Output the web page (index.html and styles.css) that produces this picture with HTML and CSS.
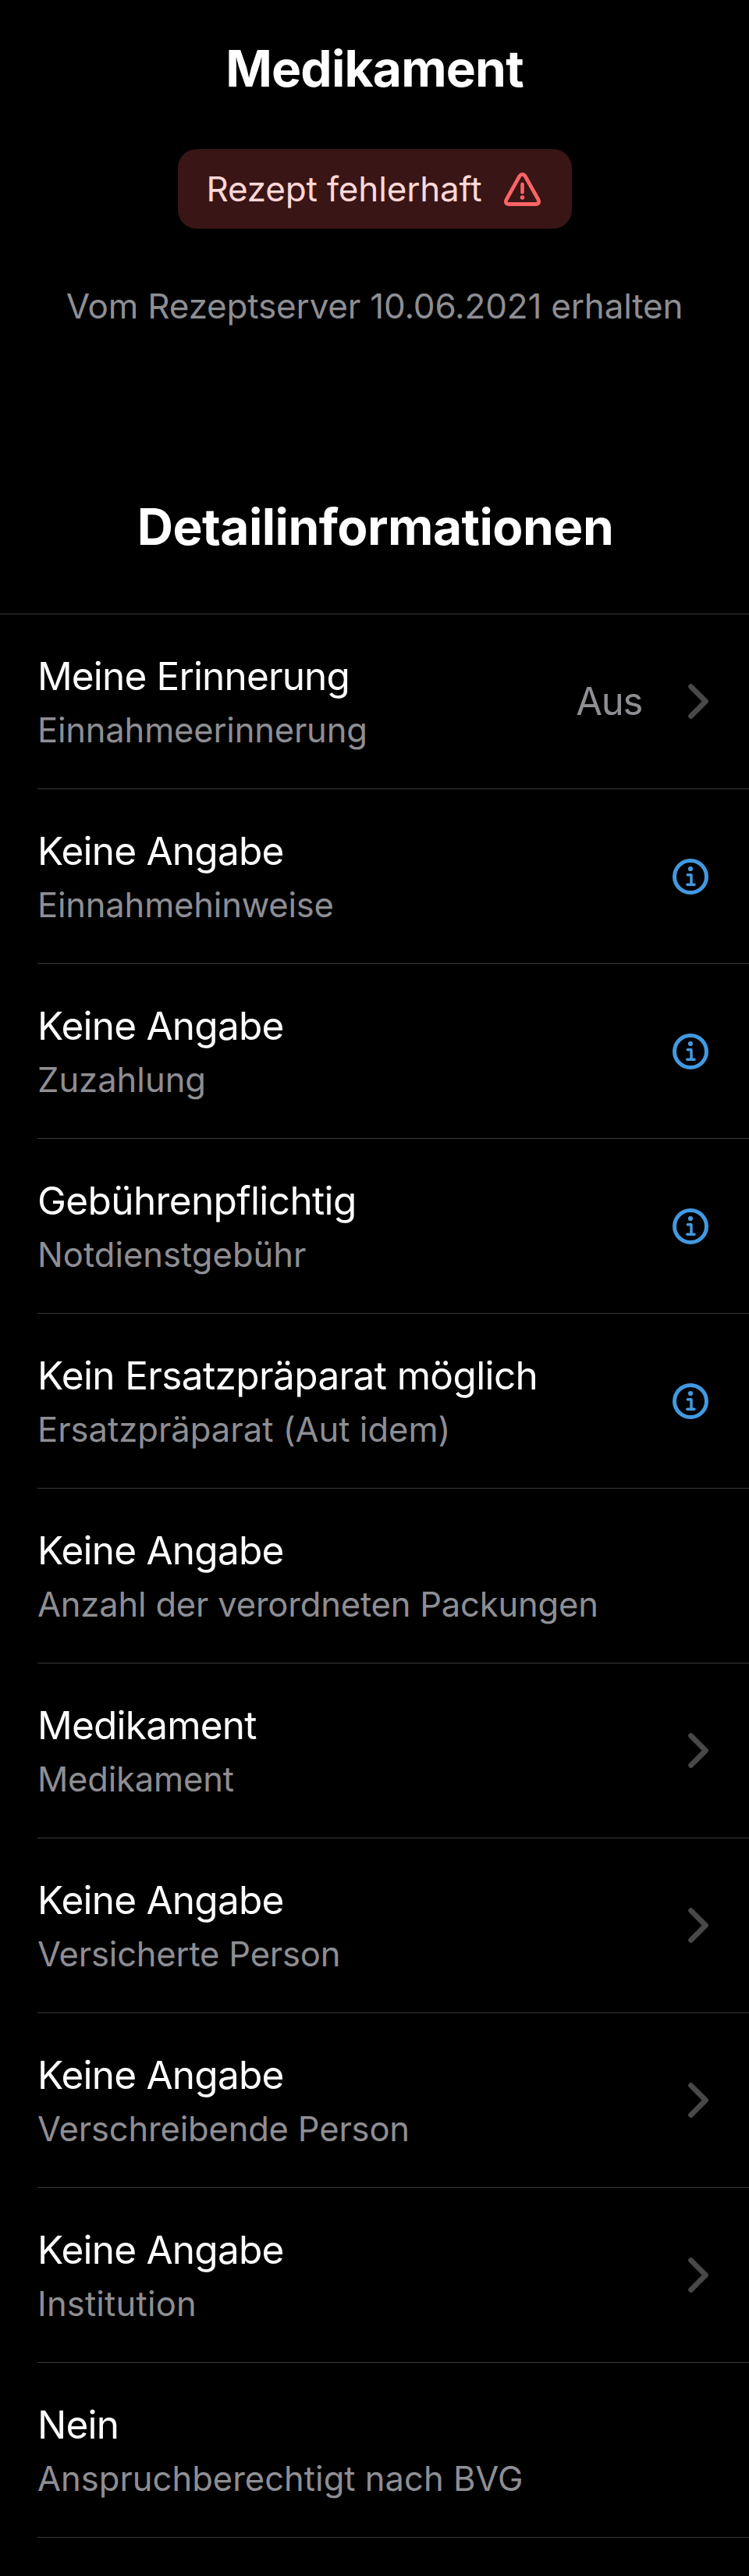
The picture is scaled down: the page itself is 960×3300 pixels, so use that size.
FILE: index.html
```html
<!DOCTYPE html>
<html lang="de">
<head>
<meta charset="utf-8">
<title>Medikament</title>
<link rel="stylesheet" href="styles.css">
</head>
<body>
<svg class="sprite" aria-hidden="true">
  <symbol id="chevron" viewBox="0 0 26 45">
    <path d="M3.6 3.7 22.4 22.5 3.6 41.3" fill="none" stroke="currentColor" stroke-width="6.8" stroke-linecap="round" stroke-linejoin="round"/>
  </symbol>
  <symbol id="info" viewBox="0 0 46 46">
    <circle cx="23" cy="23" r="20.5" fill="none" stroke="currentColor" stroke-width="5"/>
    <circle cx="23" cy="13" r="3.1" fill="currentColor"/>
    <path d="M19.3 20.8H24V32.8M18.8 33.2H28" fill="none" stroke="currentColor" stroke-width="3.5" stroke-linecap="round" stroke-linejoin="round"/>
  </symbol>
</svg>
<header class="header">
  <h1 class="heading">Medikament</h1>
  <div class="badge">
    <span>Rezept fehlerhaft</span>
    <svg class="badge-icon" viewBox="0 0 47 43">
      <path d="M19.9 4.6Q23.5 .2 27.1 4.6L43.8 34.4Q46.5 40.5 40 40.5H7Q.5 40.5 3.2 34.4Z" fill="none" stroke="currentColor" stroke-width="4.8" stroke-linejoin="round"/>
      <path d="M23.5 15V25.2" fill="none" stroke="currentColor" stroke-width="4.6" stroke-linecap="round"/>
      <circle cx="23.5" cy="32" r="2.8" fill="currentColor"/>
    </svg>
  </div>
  <p class="received">Vom Rezeptserver 10.06.2021 erhalten</p>
</header>
<main>
  <h2 class="heading heading-details">Detailinformationen</h2>
  <ul class="list">
    <li class="row"><div class="texts"><div class="value tight">Meine Erinnerung</div><div class="label snug">Einnahmeerinnerung</div></div><span class="state">Aus</span><svg class="chevron"><use href="#chevron"/></svg></li>
    <li class="row"><div class="texts"><div class="value">Keine Angabe</div><div class="label snug">Einnahmehinweise</div></div><svg class="info"><use href="#info"/></svg></li>
    <li class="row"><div class="texts"><div class="value">Keine Angabe</div><div class="label">Zuzahlung</div></div><svg class="info"><use href="#info"/></svg></li>
    <li class="row"><div class="texts"><div class="value loose">Gebührenpflichtig</div><div class="label">Notdienstgebühr</div></div><svg class="info"><use href="#info"/></svg></li>
    <li class="row"><div class="texts"><div class="value loose">Kein Ersatzpräparat möglich</div><div class="label">Ersatzpräparat (Aut idem)</div></div><svg class="info"><use href="#info"/></svg></li>
    <li class="row"><div class="texts"><div class="value">Keine Angabe</div><div class="label snug">Anzahl der verordneten Packungen</div></div></li>
    <li class="row"><div class="texts"><div class="value">Medikament</div><div class="label snug">Medikament</div></div><svg class="chevron"><use href="#chevron"/></svg></li>
    <li class="row"><div class="texts"><div class="value">Keine Angabe</div><div class="label snug">Versicherte Person</div></div><svg class="chevron"><use href="#chevron"/></svg></li>
    <li class="row"><div class="texts"><div class="value">Keine Angabe</div><div class="label snug">Verschreibende Person</div></div><svg class="chevron"><use href="#chevron"/></svg></li>
    <li class="row"><div class="texts"><div class="value">Keine Angabe</div><div class="label airy">Institution</div></div><svg class="chevron"><use href="#chevron"/></svg></li>
    <li class="row"><div class="texts"><div class="value">Nein</div><div class="label">Anspruchberechtigt nach BVG</div></div></li>
  </ul>
</main>
</body>
</html>
```
FILE: styles.css
```css
* { box-sizing: border-box; margin: 0; padding: 0; }

html { background: #000; }

body {
  min-height: 3300px;
  background: #000;
  color: #fff;
  font-family: Inter, "Liberation Sans", sans-serif;
}

.sprite { display: none; }

.header {
  display: flex;
  flex-direction: column;
  align-items: center;
  padding-top: 48px;
}

.heading {
  font-size: 64px;
  line-height: 80px;
  font-weight: 700;
  letter-spacing: -0.79px;
  text-align: center;
}

.heading-details {
  margin: 213px 0 71px;
  padding-left: 2px;
  letter-spacing: -0.52px;
}

.badge {
  display: flex;
  align-items: center;
  justify-content: space-between;
  width: 505px;
  height: 102px;
  margin-top: 63px;
  padding: 0 40px 0 37px;
  border-radius: 24px;
  background: #391515;
  color: #fed7d7;
  font-size: 44px;
  line-height: 60px;
  letter-spacing: -0.17px;
}

.badge-icon { width: 47px; height: 43px; color: #fa6466; }

.received {
  margin-top: 69px;
  color: #8e8e93;
  font-size: 44px;
  line-height: 60px;
  letter-spacing: -0.19px;
}

.list { list-style: none; border-top: 1px solid #38383a; }

.row {
  display: flex;
  align-items: center;
  height: 224px;
  margin-left: 48px;
  padding-right: 52px;
  border-bottom: 1px solid #38383a;
}

.texts {
  flex: 1;
  align-self: flex-start;
  padding-top: 49px;
  white-space: nowrap;
}

.value {
  font-size: 49.5px;
  line-height: 60px;
  letter-spacing: -0.78px;
}

.value.tight { letter-spacing: -0.85px; }
.value.loose { letter-spacing: -0.62px; }

.label {
  margin-top: 11px;
  color: #8e8e93;
  font-size: 43.5px;
  line-height: 56px;
  letter-spacing: 0.02px;
}

.label.snug { letter-spacing: -0.18px; }
.label.airy { letter-spacing: 0.2px; }

.state {
  margin-right: 59px;
  color: #8e8e93;
  font-size: 49px;
  line-height: 60px;
  letter-spacing: -1.3px;
}

.chevron { width: 26px; height: 45px; color: #48484a; }

.info { width: 46px; height: 46px; color: #4299e1; }
```
